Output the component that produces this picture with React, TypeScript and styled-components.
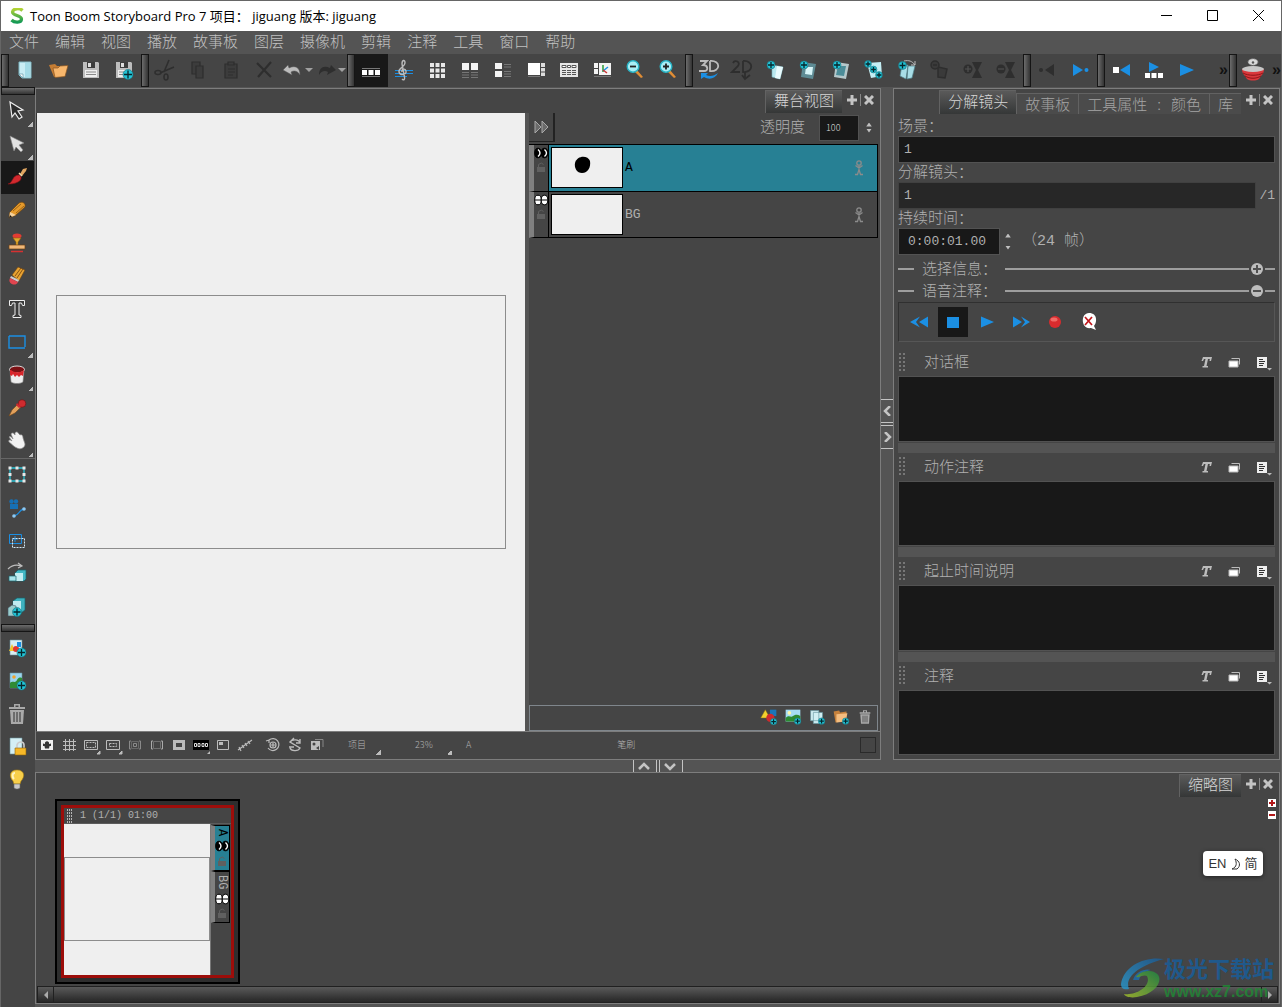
import React, { useState } from "react";
import styled, { createGlobalStyle, css } from "styled-components";

const c = {
  base: "#454545",
  rail: "#545454",
  line: "#7d7d7d",
  well: "#181818",
  edge: "#525252",
  text: "#b0b0b0",
  bright: "#d6d6d6",
  blue: "#1b8fe3",
  teal: "#278094",
  icon: "#bcbcbc",
  paper: "#efefef",
};
const ui = `"Noto Sans CJK SC", "Noto Sans", sans-serif`;
const mono = `"Liberation Mono", "Noto Sans CJK SC", monospace`;

const Global = createGlobalStyle`
  * { box-sizing: border-box; }
  body { margin: 0; background: ${c.rail}; font-family: ${ui}; font-weight: 300; color: ${c.text}; }
  button, input, textarea, select { font: inherit; color: inherit; margin: 0; padding: 0; border: 0; border-radius: 0; background: none; outline: none; }
  svg { display: block; flex: none; }
`;

/* ---------- icons ---------- */

const Badge = ({ x, y, r = 4.6 }: { x: number; y: number; r?: number }) => (
  <g>
    <circle cx={x} cy={y} r={r} fill="#22c3d6" stroke="#1a6d78" strokeWidth=".6" />
    <path d={`M${x - r + 1} ${y}h${2 * r - 2}M${x} ${y - r + 1}v${2 * r - 2}`} stroke="#06272c" strokeWidth="1.3" />
  </g>
);
const G = "#bcbcbc";
const D = "#2e2e2e";
const B = c.blue;
const W = "#f4f4f4";

const icons: Record<string, React.ReactNode> = {
  newDoc: <g><path d="M6 4h12v16H9l-3-3z" fill="#c9edf4" stroke="#7fb8c4" /><path d="M12 5h5v14h-5z" fill="#a4dbe6" /><path d="M6 16h4v4z" fill="#fff" stroke="#669aa6" strokeWidth=".7" /></g>,
  open: <g><path d="M3 7l6-1 2 2h6l1 10-10 1z" fill="#c67d33" /><path d="M7 10l5 0 2-2 8-.5-3 11-10 1z" fill="#f7b66c" stroke="#8a5420" strokeWidth=".7" /></g>,
  save: <g><path d="M4 4h15l1 1v15H4z" fill="#bdbdbd" /><path d="M8 4h8v6H8z" fill="#3d3d3d" /><path d="M9 5h3v4H9z" fill="#ddd" /><path d="M6 12h12v7H6z" fill="#eee" /><path d="M7 14h10M7 16.500h10" stroke="#888" /></g>,
  saveAs: <g><path d="M4 4h15l1 1v15H4z" fill="#bdbdbd" /><path d="M8 4h8v6H8z" fill="#3d3d3d" /><path d="M9 5h3v4H9z" fill="#ddd" /><path d="M6 12h12v7H6z" fill="#eee" /><path d="M7 14h10M7 16.500h10" stroke="#888" /><Badge x={16} y={16.500} r={5} /></g>,
  cut: <g fill="none" stroke={D} strokeWidth="1.600"><path d="M16 2L11 14M21 9L7 15" /><ellipse cx="5" cy="14.500" rx="3" ry="2" /><ellipse cx="13" cy="19" rx="2" ry="3" /></g>,
  copy: <g stroke={D} strokeWidth="1.200" fill="#3c3c3c"><path d="M6 4h8v12H6z" /><path d="M10 8h7v12h-7z" /></g>,
  paste: <g stroke={D} strokeWidth="1.200" fill="#3c3c3c"><path d="M6 6h12v14H6z" /><path d="M9 4h6v3H9zM9 11h7M9 14h7M9 17h5" /></g>,
  del: <path d="M5 5l14 14M19 4L6 19" stroke={D} strokeWidth="2.200" fill="none" />,
  undo: <path d="M2 12l5-5 1 3c6-3 11-1 11 7-2-4-6-5-9-3l1 3z" fill={G} stroke="#5a5a5a" strokeWidth=".5" />,
  redo: <path d="M22 12l-5-5-1 3c-6-3-11-1-11 7 2-4 6-5 9-3l-1 3z" fill={D} />,
  thumbs: <g><path d="M3 10.500h18M3 18.500h18" stroke="#777" /><path d="M3 12h5v5H3zM9.500 12h5v5h-5zM16 12h5v5h-5z" fill="#fff" /></g>,
  clef: <g fill="none"><path d="M3 12.500h18M3 15.500h18M3 18.500h12" stroke={B} /><path d="M10 21c2 2 3 0 2.500-2L10 6c0-4 3-5 3-1 0 4-7 5-6 9 1 4 8 3 7-1-1-3-5-2-4 1" stroke={G} strokeWidth="1.400" /></g>,
  grid: <path d="M5 5h4v4H5zM10.500 5h4v4h-4zM16 5h4v4h-4zM5 10.500h4v4H5zM10.500 10.500h4v4h-4zM16 10.500h4v4h-4zM5 16h4v4H5zM10.500 16h4v4h-4zM16 16h4v4h-4z" fill="#e8e8e8" />,
  two: <g><path d="M4 5h7v7H4zM13 5h7v7h-7z" fill={W} /><path d="M4 14.500h7M4 17h7M4 19.500h7M13 14.500h7M13 17h7M13 19.500h7" stroke="#777" /></g>,
  list: <g><path d="M4 5h7v6H4zM4 13h7v6H4z" fill={W} /><path d="M13 6.500h7M13 9h7M13 13.500h7M13 16h7M13 18.500h7" stroke="#777" /></g>,
  side: <g><path d="M4 5h12v12H4z" fill="#fff" /><path d="M17 5h4v4h-4zM17 10h4v3.500h-4zM17 14.500h4V18h-4z" fill="#ddd" /><path d="M4 18.500h12" stroke="#777" /></g>,
  sheet: <g><path d="M3 5h18v14H3z" fill="#e6e6e6" /><path d="M5 7.500h4v2H5zM10.500 7.500h3v2h-3zM15 7.500h4v2h-4z" fill="#fff" stroke="#555" /><path d="M5 12.500h4M10 12.500h4M15 12.500h4M5 14.500h4M10 14.500h4M15 14.500h4M5 16.500h4M10 16.500h4M15 16.500h4" stroke="#555" /></g>,
  timing: <g><path d="M4 5h4v5H4zM4 11h4v5H4zM9 5h12v12H9z" fill={W} /><path d="M13 7v7" stroke="#2a9d3a" strokeWidth="1.500" /><path d="M13 13l5-4" stroke={B} strokeWidth="1.500" /><path d="M13 12l4 3" stroke="#c33" strokeWidth="1.500" /><path d="M4 18.500h17" stroke="#777" /></g>,
  zoomOut: <g><path d="M14 12l6 7-2 1-6-6z" fill="#e08d35" /><circle cx="10" cy="8.500" r="5.800" fill="#a9eef5" stroke="#29b4c6" strokeWidth="1.400" /><path d="M7 8.500h6" stroke="#222" strokeWidth="1.800" /></g>,
  zoomIn: <g><path d="M14 12l6 7-2 1-6-6z" fill="#e08d35" /><circle cx="10" cy="8.500" r="5.800" fill="#a9eef5" stroke="#29b4c6" strokeWidth="1.400" /><path d="M7 8.500h6M10 5.500v6" stroke="#222" strokeWidth="1.800" /></g>,
  d3: <g fill="none"><path d="M3 3h7l-4 4c5 0 6 6 1 6H2M13 3v10c11 1 11-11 0-10" stroke={G} strokeWidth="1.800" /><path d="M4 15h7l-2 2c4 2 8 1 12-2-3 6-9 7-14 4l-3 2z" fill={B} /></g>,
  d2: <g fill="none" stroke={D} strokeWidth="1.800"><path d="M3 5c2-4 8-1 5 3l-6 6h8M13 3v11c11 1 11-12 0-11M15 14v7M12 17l3 4 5-4" /></g>,
  key1: <g><path d="M9 7l11 2-3 12-8-2z" fill="#b9e8ef" stroke="#73aeb9" strokeWidth=".6" /><path d="M14 8l6 1-3 12-5-1z" fill="#e9fbfd" /><Badge x={8} y={7} r={4} /></g>,
  key2: <g><path d="M7 4l13 2-3 15-12-2z" fill="#5e8b94" /><path d="M10 9h7l-1 8-7-1z" fill="#d7f4f7" /><Badge x={8} y={7} r={4} /></g>,
  key3: <g><path d="M7 4l13 2-3 15-12-2z" fill="#b5c8cb" /><path d="M9 8h8l-2 10-8-1z" fill="#4c8d99" /><Badge x={8} y={7} r={4} /></g>,
  key4: <g><path d="M5 5l14-1 1 14-11 2z" fill="#c3eef4" /><Badge x={6} y={6} r={3.400} /><Badge x={11.500} y={11.500} r={3.400} /><Badge x={17} y={17} r={3.400} /></g>,
  key5: <g><path d="M7 7h6l-2 14-6-3zM13 8h7l-3 12-5 1z" fill="#a8dde6" stroke="#4f7f88" strokeWidth=".7" /><path d="M9 3c5-1 8 0 11 4M20 3v4h-4" stroke={G} fill="none" /><Badge x={7.500} y={7.500} r={4} /></g>,
  key6: <g fill="#3a3a3a" stroke={D} strokeWidth="1.500"><path d="M10 9l9 2-2 9-7-1z" /><circle cx="7" cy="7" r="4" /><path d="M5 7h4" /></g>,
  key7: <g fill={D}><path d="M11 4h10l-4 8 4 8H11l4-8z" /><circle cx="7" cy="11" r="4.500" /><path d="M4 11h6M7 8v6" stroke="#505050" strokeWidth="1.200" /></g>,
  key8: <g fill={D}><path d="M11 4h10l-4 8 4 8H11l4-8z" /><circle cx="7" cy="11" r="4.500" /><path d="M4 11h6" stroke="#505050" strokeWidth="1.200" /></g>,
  prevKey: <g fill={D}><path d="M19 6v12l-9-6z" /><circle cx="6" cy="12" r="2" /></g>,
  nextKey: <g fill={B}><path d="M5 6v12l10-6z" /><circle cx="18.500" cy="12" r="2" /></g>,
  back: <g><path d="M4 9h6v6H4z" fill="#fff" /><path d="M21 6v12l-10-6z" fill={B} /></g>,
  playSel: <g><path d="M7 4l10 5-10 5z" fill={B} /><path d="M3 15h5v5H3zM9.500 15h5v5h-5zM16 15h5v5h-5z" fill="#fff" /></g>,
  play: <path d="M5 6v12l14-6z" fill={B} />,
  flip: <g><path d="M1 11h22c0 3-1 5-3 7l-2 3c-3 2-9 2-12 0l-2-3c-2-2-3-4-3-7z" fill="#d9383c" /><ellipse cx="12" cy="11" rx="11" ry="3" fill="#c7c7c7" /><path d="M2 15c5 3 15 3 20 0M4 18c5 3 11 3 16 0" stroke="#8e1518" fill="none" /><ellipse cx="12" cy="4" rx="5" ry="3.300" fill="#d8d8d8" stroke="#777" strokeDasharray="1.500 1" /><circle cx="12" cy="4.500" r="1.200" fill="#555" /></g>,
  select: <path d="M5 3l13 8-5 1 4 6-3 2-4-6-3 4z" fill="#2c2c2c" stroke="#eee" strokeWidth="1.200" />,
  contour: <path d="M5 4l14 7-5 2 4 5-2 2-5-5-2 4z" fill="#e2e2e2" stroke="#888" strokeWidth=".6" />,
  brush: <g><path d="M15 9l3-5 4-1-1 3-4 5z" fill="#e1a661" /><path d="M3 19c5-1 4-9 11-9 3 1 3 5-1 7s-7 2-10 2z" fill="#d2292e" stroke="#7d1417" strokeWidth=".6" /><path d="M14 8l3 3" stroke="#f0d8a8" strokeWidth="1.500" /></g>,
  pencil: <g><path d="M5 14L14 5c3-2 7 0 6 4l-9 8-7 3z" fill="#e59a2b" stroke="#6d420d" strokeWidth=".7" /><path d="M5 14l6 3-7 3z" fill="#f3d09c" /><path d="M4 20l1-3 2 2z" fill="#111" /><path d="M8 13l8-7M11 15l8-7" stroke="#8b5812" strokeWidth=".8" /></g>,
  stamp: <g><ellipse cx="12" cy="5" rx="4.500" ry="2.500" fill="#e33c33" /><path d="M8 7h8l-3 4v4h-2v-4z" fill="#e3aa2e" stroke="#8a5e10" strokeWidth=".6" /><path d="M4 14h16v4H4z" fill="#f0b878" stroke="#6c3d11" strokeWidth=".7" /><path d="M6 20.500h12" stroke="#d63131" strokeWidth="1.500" /></g>,
  eraser: <g><path d="M7 11l6-8 7 3-6 11z" fill="#e8a333" stroke="#6d420d" strokeWidth=".6" /><path d="M10 12l6-8M12 14l6-9" stroke="#7a4a0e" strokeWidth=".9" /><path d="M6 12l8 4-1 2-8-4z" fill="#ccc" /><path d="M5 14l8 4c-2 5-11 2-8-4z" fill="#e0454f" /></g>,
  text: <path d="M4.500 3.500h15v5h-2l-1-2.500H14v12l2 .5v2H8v-2l2-.5V6H7.500l-1 2.500h-2z" fill="#3a3a3a" stroke="#eee" />,
  rect: <path d="M4 6h16v11M20 18H4V6" fill="none" stroke={B} strokeWidth="1.400" />,
  bucket: <g><path d="M5 8h14l-1 11c-3 2-9 2-12 0z" fill="#eee" stroke="#777" strokeWidth=".6" /><ellipse cx="12" cy="6.500" rx="7.500" ry="3.500" fill="#7b1114" stroke="#ddd" /><path d="M5 7v5l2 1 1-2 2 3 2-2 2 2 2-2 2 1 1-6c-3 3-10 3-13 0z" fill="#d8262b" /></g>,
  dropper: <g><path d="M4 20l3-6 6-6 3 3-6 6z" fill="#e2a15c" stroke="#744616" strokeWidth=".6" /><circle cx="17" cy="7.500" r="3.800" fill="#cf2b2f" stroke="#6b1113" strokeWidth=".6" /><path d="M12 7l4 4-2 1-3-3z" fill="#cf2b2f" /></g>,
  hand: <path d="M4 8c1-1 3 0 4 2L6 5c1-2 3-1 4 1V4c1-2 3-1 4 1l1 1c2-1 3 1 3 3l2 6c0 4-5 6-8 4-3-1-5-4-8-6-1-2 1-3 3-1z" fill="#f2f2f2" stroke="#888" strokeWidth=".7" />,
  transform: <g><path d="M5 5h14v13H5z" fill="none" stroke="#29c0d2" strokeWidth="1.300" /><path d="M3.500 3.500h3v3h-3zM10.500 3.500h3v3h-3zM17.500 3.500h3v3h-3zM3.500 10h3v3h-3zM17.500 10h3v3h-3zM3.500 16.500h3v3h-3zM10.500 16.500h3v3h-3zM17.500 16.500h3v3h-3z" fill="#e8e8e8" /></g>,
  cam: <g fill="none"><path d="M5 8h8v5H5z" fill="#1670b4" /><circle cx="6.500" cy="5.500" r="2.200" fill="#1670b4" /><circle cx="11" cy="5.500" r="2.200" fill="#1670b4" /><path d="M9 20c6-1 4-6 10-7" stroke={B} strokeWidth="1.300" /><circle cx="9" cy="20" r="1.800" fill="#8cc8f2" /><circle cx="19" cy="13" r="1.800" fill="#8cc8f2" /></g>,
  camMove: <g fill="none"><path d="M4.500 5.500h12v9h-12zM10 7v6M7 10h6" stroke={B} /><path d="M7.500 9.500h12v9h-12z" stroke="#cfe6f5" strokeDasharray="2 1" /></g>,
  layerMove: <g><path d="M10 11l3-3h8v9l-2 2h-9z" fill="#42b7c4" stroke="#16616b" strokeWidth=".7" /><path d="M10 11h8v8h-8z" fill="#c2edf2" /><path d="M4 14h7v5H4z" fill="#a7e3ea" stroke="#16616b" strokeWidth=".7" /><path d="M3 7c4-4 8-5 13-3M13 1l4 3-4 2" stroke={G} strokeWidth="1.200" fill="none" /></g>,
  layerAdd: <g><path d="M8 6l4-3h8v12l-4 3H8z" fill="#3eb1be" stroke="#16616b" strokeWidth=".7" /><path d="M8 6h8v12H8z" fill="#bfeaf0" /><path d="M3 13l4-3 4 1v10H3z" fill="#9cc" stroke="#456" strokeWidth=".6" /><Badge x={12} y={17} r={4.500} /></g>,
  docAdd: <g><path d="M5 4h12v15H5z" fill="#d9eef2" stroke="#69929b" strokeWidth=".6" /><path d="M7 8l3 7H4z" fill="#f0c52a" /><circle cx="11" cy="13" r="3" fill="#e2352f" /><path d="M12 6h4v5h-4z" fill={B} /><Badge x={16.500} y={16.500} r={4.500} /></g>,
  imgAdd: <g><path d="M5 4h12v15H5z" fill="#9bd4ee" stroke="#69929b" strokeWidth=".6" /><circle cx="9" cy="8" r="1.800" fill="#f0a22e" /><path d="M5 14c3-3 5 1 7-3s5-2 5-2v10H5z" fill="#2f8b34" /><Badge x={16.500} y={16.500} r={4.500} /></g>,
  trash: <g fill="#a9a9a9"><path d="M4 5h16v2H4zM9 2h6v3h-1.500V3.500h-3V5H9z" /><path d="M5 8h14l-1 14H6z" /><path d="M9 10v10M12 10v10M15 10v10" stroke="#444" strokeWidth="1.200" /></g>,
  lockDoc: <g><path d="M5 3h12v16H5z" fill="#d4eff4" stroke="#69929b" strokeWidth=".6" /><path d="M12 13v-3c1-4 7-4 7 0v3" fill="none" stroke="#ccc" strokeWidth="1.600" /><path d="M10 13h11v7H10z" fill="#f6b828" stroke="#8d6207" strokeWidth=".6" /></g>,
  bulb: <g><path d="M12 2c-8 0-8 7-4 11l1 3h6l1-3c4-4 4-11-4-11z" fill="#f8cf4a" stroke="#b4860f" strokeWidth=".6" /><path d="M10 5c-3 0-3 4-1 6" stroke="#fff3bd" strokeWidth="2" fill="none" /><path d="M9 16h6v4l-2 1h-2l-2-1z" fill="#c8c8c8" stroke="#666" strokeWidth=".6" /></g>,
  rew: <path d="M21 6.500v11L12 12zM13 6.500L3 12l10 5.500L9 12z" fill={B} />,
  stop: <path d="M6 7h12v11H6z" fill={B} />,
  play2: <path d="M6 6.500v11l13-5.500z" fill={B} />,
  ffwd: <path d="M4 6.500v11l9-5.500zM12 6.500l4 5.500-4 5.500 9-5.500z" fill={B} />,
  rec: <g><circle cx="12" cy="12" r="6" fill="#d92b2e" /><ellipse cx="11" cy="9.500" rx="3.500" ry="2" fill="#f06a66" /></g>,
  noVoice: <g><path d="M12 3c9 0 8 10 5 13l2 4-5-2c-10 2-11-15-2-15z" fill="#fff" /><path d="M8 7l7 8M15 7l-7 8" stroke="#c0161b" strokeWidth="1.700" /></g>,
  italicT: <path d="M9 7h9l-1 4h-1.500l.3-2H14l-1.500 7h1.500v1.500H8.500V16H10l1.500-7H10l-1 2H7.500z" fill={G} />,
  windows: <g><path d="M9.500 8.500h8v6" fill="none" stroke={G} /><path d="M7 11h9v6H7z" fill="#fff" stroke={G} /></g>,
  doc: <g><path d="M7 7h10v11H7z" fill="#eee" /><path d="M9 9.500h4M9 11.500h6M9 13.500h5M9 15.500h4" stroke="#333" /><path d="M17 18h5l-2.500 2.500z" fill={G} /></g>,
  expand: <g fill="#6b6b6b" stroke="#a8a8a8"><path d="M6 6v12l6-6zM13 6v12l6-6z" /></g>,
  light: <g><path d="M6 7h12v10H6z" fill="#eee" /><path d="M8 10.500l2 .5V9.500Q12 7 14 9.500V11l2-.5V13h-1.500l-.5 2.500h-4L9.500 13H8z" fill="#333" /></g>,
  hash: <path d="M8.500 6v12M12.500 6v12M16.500 6v12M6 8.500h13M6 12.500h13M6 16.500h13" stroke={G} fill="none" />,
  safe: <g fill="none" stroke={G}><path d="M5.500 7.500h13v9h-13z" /><path d="M7.500 9.500h9v5h-9z" strokeDasharray="2 1" /><path d="M21 18v3h-3z" fill={G} /></g>,
  safe2: <g fill="none" stroke={G}><path d="M5.500 7.500h13v9h-13z" /><path d="M8.500 10.500h7v3h-7z" strokeDasharray="2 1" /><path d="M21 18v3h-3z" fill={G} /></g>,
  mask: <g fill="none" stroke="#8a8a8a"><path d="M8 8H6.500v8H8M16 8h1.500v8H16M10.500 10.500h3v3h-3z" /><path d="M8.500 8.500h7v7h-7z" stroke="#666" /></g>,
  mask2: <g fill="none" stroke="#aaa"><path d="M8 8H6.500v8H8M16 8h1.500v8H16" /><path d="M8.500 8.500h7v7h-7z" stroke="#6f6f6f" /></g>,
  fill: <path d="M6 7h12v10H6zM9 10v4h6v-4z" fill={G} fillRule="evenodd" />,
  tc: <g><path d="M4 7h16v10H4z" fill="#000" /><path d="M5.500 10.500h2v3h-2zM9 10.500h2v3H9zM13 10.500h2v3h-2zM16.500 10.500h2v3h-2z" fill="none" stroke="#ddd" /><path d="M21 18v3h-3z" fill={G} /></g>,
  pip: <g><path d="M6.500 7.500h11v9h-11z" fill="none" stroke={G} /><path d="M8 9h4v3H8z" fill={G} /></g>,
  onion: <path d="M5 17l14-10M6 14l2 4M9 12l2 3M12 10l2 3M15 8l2 3" stroke={G} fill="none" strokeWidth="1.200" />,
  rotate: <g fill="none" stroke={G} strokeWidth="1.200"><path d="M8 7a6 6 0 1 1-1 8M5 8l3-1 0 3" /><circle cx="12" cy="12" r="3" /><path d="M12 9.500v5M9.500 12h5" /></g>,
  reset: <g fill="none" stroke={G} strokeWidth="1.400"><path d="M17 10c-1-4-8-4-10-1l10 6c-2 4-9 3-10 0M17 6v4h-4M6 14h5M11 5l-4 4" /></g>,
  camView: <g><path d="M10 6.500h8V14" fill="none" stroke="#888" /><path d="M6 8h9v9H6z" fill={G} /><circle cx="9" cy="11" r="1.500" fill="#444" /><path d="M11 15l3-2v4z" fill="#444" /></g>,
  shapes: <g><path d="M8 4l5 9H3z" fill="#f2d12e" stroke="#8b7412" strokeWidth=".5" /><path d="M13 4h7v7h-7z" fill="#1b76b8" /><circle cx="13.500" cy="13" r="4.500" fill="#cf2a2c" /><Badge x={17} y={17} r={3.500} /></g>,
  pic: <g><path d="M4 4h16v13H4z" fill="#a5dcf3" /><circle cx="8" cy="7.500" r="2" fill="#fff6a8" /><path d="M4 13c4-4 5 0 8-2s5-2 8 0v6H4z" fill="#2c8a31" /><Badge x={17} y={16.500} r={3.500} /></g>,
  dup: <g><path d="M5 5h9v11H5zM8 7h10v12H8z" fill="#d1eff3" stroke="#62939c" strokeWidth=".7" /><Badge x={17} y={16.500} r={3.500} /></g>,
  group: <g><path d="M4 6l6-1 1 2 7-1v10L6 18z" fill="#c6813c" /><path d="M7 9l12-1-2 9-10 1z" fill="#f4bd80" /><Badge x={17} y={16.500} r={3.500} /></g>,
};

const Icon = ({ name, size = 24 }: { name: string; size?: number }) => (
  <svg width={size} height={size} viewBox="0 0 24 24" aria-hidden="true">{icons[name]}</svg>
);
const Eyes = ({ open }: { open?: boolean }) => (
  <svg width="14" height="12" viewBox="0 0 14 12" aria-hidden="true">
    <ellipse cx="4" cy="6" rx="3.300" ry="4.800" fill={open ? "#000" : "#fff"} stroke="#000" />
    <ellipse cx="10.500" cy="6" rx="3.300" ry="4.800" fill={open ? "#000" : "#fff"} stroke="#000" />
    {open ? <path d="M4 2.500q4 3.500 0 7M10.500 2.500q4 3.500 0 7" stroke="#fff" strokeWidth="1.400" fill="none" /> : <path d="M1 6h12.500" stroke="#000" />}
  </svg>
);
const Lock = () => (
  <svg width="10" height="11" viewBox="0 0 10 11" aria-hidden="true">
    <path d="M2.500 5V2.500Q5.500-.5 7.500 2.500" fill="none" stroke="#606060" /><path d="M1 5h8v5H1z" fill="#606060" />
  </svg>
);
const Puppet = () => (
  <svg width="10" height="16" viewBox="0 0 10 16" aria-hidden="true">
    <path d="M5 5.500v4L3.500 14.500H1M5 9.500l1.500 5H9M1.500 5.500L5 8l3.500-2.500" fill="none" stroke="#8b8b8b" strokeWidth="1.300" /><circle cx="5" cy="3" r="2.200" fill="none" stroke="#8b8b8b" strokeWidth="1.300" />
  </svg>
);
const Dots = ({ cols = 2, w = 7, h = 19 }: { cols?: number; w?: number; h?: number }) => (
  <svg width={w} height={h} aria-hidden="true">
    {Array.from({ length: 5 * cols }, (_, i) => (
      <rect key={i} x={(i % cols) * (cols > 2 ? 2 : 4)} y={Math.floor(i / cols) * (cols > 2 ? 3 : 4)} width={cols > 2 ? 1 : 2} height="2" fill={cols > 2 ? "#b5b5b5" : "#777"} />
    ))}
  </svg>
);
const Chevron = ({ d }: { d: "up" | "down" | "left" | "right" }) => (
  <svg width="14" height="10" viewBox="-7 -5 14 10" aria-hidden="true">
    <path d={{ up: "M-6 3L-1-2 4 3", down: "M-6-2L-1 3 4-2", left: "M2-5L-3 0 2 5", right: "M-3-5L2 0-3 5" }[d]} fill="none" stroke="#c4c4c4" strokeWidth="2.500" />
  </svg>
);

/* ---------- frame ---------- */

const Window = styled.div`
  display: flex;
  flex-direction: column;
  min-height: 100vh;
  border: 1px solid #666;
  border-bottom: 0;
  background: ${c.rail};
`;
const TitleBar = styled.header`
  display: flex;
  align-items: center;
  height: 30px;
  padding-left: 9px;
  background: #fff;
  color: #000;
  font: 400 13px/28px "Open Sans", ${ui};
`;
const TitleText = styled.span`
  flex: 1;
  padding-left: 6px;
  white-space: pre;
`;
const WinButton = styled.button`
  width: 46px;
  height: 30px;
  padding-bottom: 2px;
  display: grid;
  place-items: center;
`;
const MenuBar = styled.nav`
  display: flex;
  gap: 16px;
  height: 23px;
  padding-left: 8px;
  font-size: 15px;
  line-height: 18px;
  color: #c2c2c2;
`;
const MenuItem = styled.button`
  padding-bottom: 4px;
`;
const ToolBar = styled.div`
  display: flex;
  height: 33px;
  background: ${c.base};
`;
const Grip = styled.span<{ $flat?: boolean }>`
  flex: none;
  width: ${(p) => (p.$flat ? "auto" : "8px")};
  height: ${(p) => (p.$flat ? "8px" : "auto")};
  border: 1px solid #151515;
  background: linear-gradient(${(p) => (p.$flat ? "180deg" : "90deg")}, #6c6c6c, #333);
`;
const ToolButton = styled.button<{ $on?: boolean; $more?: boolean }>`
  flex: none;
  width: 33px;
  height: 33px;
  padding: 0 2px 2px 0;
  display: flex;
  align-items: center;
  justify-content: center;
  background: ${(p) => (p.$on ? c.well : "none")};
  ${(p) => p.$more && css`
    background: linear-gradient(135deg, transparent 50%, ${c.icon} 50%) right 1px bottom 1px / 5px 5px no-repeat;
  `}
`;
const Caret = styled.span`
  border: 4px solid transparent;
  border-top-color: #a0a0a0;
  border-bottom: 0;
`;
const Overflow = styled.button<{ $grow?: boolean }>`
  flex: ${(p) => (p.$grow ? "1" : "none")};
  min-width: 11px;
  padding-right: ${(p) => (p.$grow ? "1px" : "0")};
  padding-bottom: 2px;
  text-align: right;
  color: #111;
  font: 700 16px/28px "Liberation Sans", sans-serif;
`;
const Body = styled.div`
  flex: 1;
  display: flex;
`;
const SideBar = styled.aside`
  width: 34px;
  flex: none;
  display: flex;
  flex-direction: column;
  background: ${c.base};
`;
const Rule = styled.hr`
  width: 100%;
  height: 1px;
  margin: 0;
  border: 0;
  border-top: 1px solid #666;
`;
const Workspace = styled.main`
  flex: 1;
  min-width: 0;
  display: flex;
  flex-direction: column;
  padding: 1px 1px 3px 0;
`;
const Upper = styled.div`
  flex: 1;
  display: flex;
`;
const Panel = styled.section<{ $width?: number; $height?: number }>`
  ${(p) => (p.$width ? `flex: none; width: ${p.$width}px;` : p.$height ? `flex: none; height: ${p.$height}px;` : "flex: 1;")}
  min-width: 0;
  display: flex;
  flex-direction: column;
  border: 1px solid ${c.line};
  background: ${c.base};
`;
const Divider = styled.div<{ $vertical?: boolean }>`
  flex: none;
  display: flex;
  flex-direction: ${(p) => (p.$vertical ? "column" : "row")};
  align-items: center;
  justify-content: center;
  gap: 2px;
  ${(p) => (p.$vertical ? "width: 12px;" : "height: 12px;")}
`;
const DividerButton = styled.button<{ $vertical?: boolean }>`
  display: grid;
  place-items: center;
  ${(p) => p.$vertical
    ? `width: 12px; height: 24px; border: solid #c4c4c4; border-width: 1px 0;`
    : `width: 24px; height: 12px; border: solid #c4c4c4; border-width: 0 1px;`}
`;
const TabRow = styled.div<{ $tall?: boolean }>`
  flex: none;
  display: flex;
  align-items: ${(p) => (p.$tall ? "flex-end" : "flex-start")};
  justify-content: flex-end;
  height: ${(p) => (p.$tall ? "25px" : "24px")};
  padding: 1px 4px 0 0;
`;
const Tab = styled.button<{ $on?: boolean }>`
  height: ${(p) => (p.$on ? "100%" : "21px")};
  max-height: 24px;
  padding: 0 8px ${(p) => (p.$on ? "4px" : "0")};
  border: 1px solid #626262;
  border-width: 1px 0 0 1px;
  white-space: pre;
  font-size: 15px;
  line-height: 18px;
  color: ${(p) => (p.$on ? c.bright : "#a4a4a4")};
  background: ${(p) => (p.$on ? "linear-gradient(#5a5a5a, #353737)" : "#4b4b4b")};
`;
const TabTools = styled.div`
  display: flex;
  align-items: center;
  align-self: flex-start;
  height: 20px;
  margin-left: 2px;
`;
const TabTool = styled.button`
  width: 16px;
  height: 16px;
  display: grid;
  place-items: center;
  & + & { border-left: 1px solid #888; height: 12px; }
`;

const PanelTools = () => (
  <TabTools>
    <TabTool aria-label="+"><svg width="12" height="12"><path d="M1 6h10M6 1v10" stroke="#c4c4c4" strokeWidth="3" /></svg></TabTool>
    <TabTool aria-label="×"><svg width="10" height="10"><path d="M1 1l8 8M9 1L1 9" stroke="#c4c4c4" strokeWidth="3" /></svg></TabTool>
  </TabTools>
);

/* ---------- stage ---------- */

const StageBody = styled.div`
  flex: 1;
  display: flex;
  border-left: 1px solid #333;
  border-bottom: 1px solid ${c.line};
`;
const Canvas = styled.div`
  flex: 1;
  min-width: 0;
  display: grid;
  place-items: center;
  background: ${c.paper};
`;
const Frame = styled.div`
  width: calc(100% - 38px);
  aspect-ratio: 450 / 254;
  border: 1px solid #8c8c8c;
`;
const LayerPane = styled.div`
  width: 355px;
  flex: none;
  display: flex;
  flex-direction: column;
  padding-right: 2px;
  border-left: 4px solid ${c.rail};
`;
const LayerHead = styled.div`
  display: flex;
  align-items: center;
  height: 31px;
  padding: 0 5px 2px 0;
  font-size: 15px;
`;
const OpacityLabel = styled.label`
  height: 24px;
  line-height: 20px;
`;
const Toggle = styled.button`
  width: 26px;
  height: 29px;
  margin-right: auto;
  display: grid;
  place-items: center;
  border: 1px solid #222;
  border-width: 0 2px 1px 0;
`;
const OpacityInput = styled.input`
  width: 40px;
  height: 26px;
  margin: 0 6px 0 14px;
  padding-left: 6px;
  border: 1px solid ${c.edge};
  background: ${c.well};
  font-size: 9px;
  color: #ddd;
`;
const Steps = styled.span<{ $gap: number }>`
  display: flex;
  flex-direction: column;
  gap: ${(p) => p.$gap}px;
`;
const Step = styled.button<{ $down?: boolean }>`
  width: 8px;
  height: 4px;
  background: #c0c0c0;
  clip-path: ${(p) => (p.$down ? "polygon(15% 0, 85% 0, 50% 100%)" : "polygon(50% 0, 85% 100%, 15% 100%)")};
`;
const LayerList = styled.ul`
  margin: 0;
  padding: 0;
  list-style: none;
  border: 1px solid #000;
  border-left: 0;
  border-bottom: 0;
`;
const LayerRow = styled.li<{ $on?: boolean }>`
  display: flex;
  align-items: center;
  height: ${(p) => (p.$on ? "47px" : "46px")};
  padding-right: 13px;
  border-bottom: 1px solid #000;
  border-left: 5px solid #808080;
  color: ${(p) => (p.$on ? "#000" : c.text)};
  background: ${(p) => (p.$on ? c.teal : c.base)};
`;
const LayerFlags = styled.div`
  width: 15px;
  height: 100%;
  padding-top: 2px;
  display: flex;
  flex-direction: column;
  align-items: center;
  gap: 3px;
  border-right: 1px solid #000;
  background: ${c.base};
`;
const Plain = styled.button`
  display: grid;
  place-items: center;
`;
const LayerThumb = styled.div`
  width: 72px;
  height: 41px;
  margin: 0 2px 1px;
  border: 1px solid #000;
  background: ${c.paper};
`;
const LayerName = styled.span`
  flex: 1;
  font: 400 13px/20px ${mono};
`;
const LayerTools = styled.div`
  display: flex;
  align-items: center;
  justify-content: flex-end;
  height: 26px;
  margin-top: auto;
  padding-bottom: 2px;
  border: 1px solid #7f868c;
`;
const LayerTool = styled.button`
  width: 24px;
  display: grid;
  place-items: center;
`;
const StatusBar = styled.div`
  flex: none;
  display: flex;
  align-items: center;
  height: 27px;
  padding-bottom: 2px;
  font-size: 9px;
  color: #b4b4b4;
`;
const StatusButton = styled.button<{ $gap?: boolean }>`
  width: 22px;
  height: 24px;
  margin-left: ${(p) => (p.$gap ? "6px" : "0")};
  display: flex;
  justify-content: center;
`;
const StatusSelect = styled.select<{ $wide?: boolean }>`
  width: ${(p) => (p.$wide ? "71px" : "53px")};
  height: 20px;
  padding-left: ${(p) => (p.$wide ? "34px" : "20px")};
  appearance: none;
  background: linear-gradient(135deg, transparent 50%, ${c.icon} 50%) right bottom / 5px 5px no-repeat;
`;
const StatusText = styled.span<{ $brush?: boolean }>`
  margin-left: ${(p) => (p.$brush ? "146px" : "14px")};
`;
const Swatch = styled.button`
  width: 16px;
  height: 16px;
  margin: 0 4px 0 auto;
  border: 1px solid #2a2a2a;
`;

/* ---------- panel view ---------- */

const Form = styled.form`
  flex: 1;
  display: flex;
  flex-direction: column;
  padding: 3px 4px 4px;
  font-size: 15px;
`;
const Label = styled.label`
  height: 19px;
  line-height: 16px;
`;
const FieldRow = styled.div`
  display: flex;
  align-items: center;
  gap: 3px;
`;
const Field = styled.input<{ $dim?: boolean; $time?: boolean }>`
  ${(p) => (p.$time ? "flex: none; width: 102px; margin-right: 1px;" : "flex: 1; min-width: 0;")}
  height: 27px;
  padding-left: ${(p) => (p.$time ? "9px" : "5px")};
  border: 1px solid ${(p) => (p.$dim ? "#404040" : c.edge)};
  background: ${(p) => (p.$dim ? "#272727" : c.well)};
  font: 400 13px/20px ${mono};
`;
const Suffix = styled.span<{ $far?: boolean }>`
  padding-left: ${(p) => (p.$far ? "7px" : "0")};
  font: 300 ${(p) => (p.$far ? "15px" : "13px")}/20px ${mono};
`;
const Folds = styled.div`
  padding-top: 3px;
`;
const Fold = styled.div`
  display: flex;
  align-items: center;
  height: 22px;
  &::before { content: ""; width: 16px; height: 2px; margin-right: 8px; background: #9e9e9e; }
  &::after { content: ""; width: 10px; height: 2px; margin-left: 2px; background: #9e9e9e; }
`;
const FoldTitle = styled.span`
  height: 22px;
  line-height: 19px;
`;
const FoldLine = styled.span`
  flex: 1;
  height: 2px;
  margin: 0 2px 0 8px;
  background: #9e9e9e;
`;
const FoldButton = styled.button`
  width: 12px;
  height: 12px;
  border-radius: 50%;
  background: #bdbdbd;
  display: grid;
  place-items: center;
`;
const VoiceBar = styled.div`
  display: flex;
  align-items: center;
  gap: 4px;
  height: 40px;
  padding-left: 5px;
  margin: 0 0 6px 0;
  border: 1px solid #565656;
  border-top-color: #303030;
  border-left-color: #303030;
`;
const VoiceButton = styled.button<{ $on?: boolean }>`
  width: 30px;
  height: 30px;
  display: grid;
  place-items: center;
  background: ${(p) => (p.$on ? c.well : "none")};
`;
const Caption = styled.div`
  flex: 1;
  display: flex;
  flex-direction: column;
  & + & { border-top: 10px solid ${c.rail}; margin-top: 1px; }
`;
const CaptionHead = styled.div`
  display: flex;
  align-items: center;
  height: 28px;
  padding-left: 1px;
`;
const CaptionLabel = styled.label`
  flex: 1;
  padding: 0 0 2px 18px;
  line-height: 20px;
`;
const CaptionTool = styled.button`
  width: 28px;
  height: 24px;
  padding-left: 2px;
  display: grid;
  place-items: center;
`;
const CaptionText = styled.textarea`
  flex: 1;
  min-height: 40px;
  padding: 4px;
  resize: none;
  border: 1px solid ${c.edge};
  background: ${c.well};
`;

/* ---------- thumbnails ---------- */

const Strip = styled.div`
  flex: 1;
  display: flex;
  align-items: flex-start;
  justify-content: space-between;
  padding: 2px 3px 0 19px;
`;
const Card = styled.div`
  width: 185px;
  height: 185px;
  border: 2px solid #000;
  padding: 4px;
  background: #2e2e2e;
`;
const CardInner = styled.div`
  height: 100%;
  display: flex;
  flex-direction: column;
  border: 3px solid #9c0d0a;
  background: ${c.base};
`;
const CardHead = styled.div`
  display: flex;
  align-items: center;
  gap: 7px;
  height: 16px;
  padding-left: 3px;
  border-bottom: 1px solid #5c5c5c;
  font: 400 10px/14px "Liberation Mono", monospace;
  white-space: pre;
`;
const CardBody = styled.div`
  flex: 1;
  display: flex;
`;
const CardPicture = styled.div`
  flex: 1;
  display: grid;
  align-items: center;
  padding-bottom: 2px;
  border-right: 1px solid #777;
  background: ${c.paper};
`;
const CardFrame = styled.div`
  height: 84px;
  border: 1px solid #8c8c8c;
`;
const CardLayers = styled.div`
  width: 20px;
  padding: 1px 1px 0 0;
`;
const CardLayer = styled.div<{ $on?: boolean }>`
  display: flex;
  flex-direction: column;
  align-items: center;
  justify-content: space-between;
  height: ${(p) => (p.$on ? "46px" : "52px")};
  padding: 3px 0;
  border: 1px solid #000;
  border-left: 4px solid #808080;
  color: ${(p) => (p.$on ? "#000" : c.text)};
  background: ${(p) => (p.$on ? c.teal : c.base)};
`;
const SideName = styled.span`
  writing-mode: vertical-rl;
  font: 400 12px/14px ${mono};
`;
const RowMarks = styled.div`
  display: flex;
  flex-direction: column;
  gap: 4px;
`;
const ScrollRow = styled.div`
  flex: none;
  display: flex;
  height: 17px;
  margin: 0 1px;
  border: 1px solid #202020;
  background: linear-gradient(#5a5a5a, #262626);
`;
const ScrollEnd = styled.button<{ $right?: boolean }>`
  width: 16px;
  display: grid;
  place-items: center;
  margin-left: ${(p) => (p.$right ? "auto" : "0")};
  border: solid #202020;
  border-width: ${(p) => (p.$right ? "0 0 0 1px" : "0 1px 0 0")};
`;

const Ime = styled.div`
  position: absolute;
  right: 19px;
  bottom: 131px;
  display: flex;
  align-items: center;
  justify-content: center;
  gap: 4px;
  width: 60px;
  height: 25px;
  border-radius: 4px;
  background: #fff;
  color: #333;
  box-shadow: 0 1px 4px #222;
  font: 400 13px/20px "Liberation Sans", ${ui};
`;
const Mark = styled.div`
  position: absolute;
  right: 8px;
  bottom: 6px;
  display: flex;
  align-items: center;
  pointer-events: none;
  opacity: .8;
`;
const MarkText = styled.div`
  display: flex;
  flex-direction: column;
  gap: 4px;
  font: 700 22px/24px ${ui};
  color: #165f9e;
`;
const MarkSite = styled.span`
  font: 700 16px/18px "Liberation Sans", sans-serif;
  color: #1f8a35;
`;

/* ---------- content ---------- */

const menus = ["文件", "编辑", "视图", "播放", "故事板", "图层", "摄像机", "剪辑", "注释", "工具", "窗口", "帮助"];
const topTools = [
  ["newDoc", "open", "save", "saveAs"],
  ["cut", "copy", "paste", "del", "undo", "redo"],
  ["thumbs", "clef", "grid", "two", "list", "side", "sheet", "timing", "zoomOut", "zoomIn"],
  ["d3", "d2", "key1", "key2", "key3", "key4", "key5", "key6", "key7", "key8"],
  ["prevKey", "nextKey"],
  ["back", "playSel", "play"],
];
const drawTools = ["select", "contour", "brush", "pencil", "stamp", "eraser", "text", "rect", "bucket", "dropper", "hand"];
const moveTools = ["transform", "cam", "camMove", "layerMove", "layerAdd"];
const assetTools = ["docAdd", "imgAdd", "trash", "lockDoc", "bulb"];
const withMore = ["select", "contour", "rect", "bucket", "hand"];
const viewTools = ["light", "hash", "safe", "safe2", "mask", "mask2", "fill", "tc", "pip", "onion", "rotate", "reset", "camView"];
const captions = ["对话框", "动作注释", "起止时间说明", "注释"];

export default function App() {
  const [tool, setTool] = useState("brush");
  const [panelTab, setPanelTab] = useState("分解镜头");

  return (
    <Window>
      <Global />
      <TitleBar>
        <svg width="14" height="17" viewBox="0 0 14 17" aria-hidden="true">
          <defs><linearGradient id="logo" x2="0" y2="1"><stop stopColor="#b3d334" /><stop offset="1" stopColor="#159a55" /></linearGradient></defs>
          <path d="M12.500 2.500C10 0 3 0 2.500 4c0 4 9 3 9 7 0 4-7 4-10 1" fill="none" stroke="url(#logo)" strokeWidth="3.200" />
        </svg>
        <TitleText>Toon Boom Storyboard Pro 7 项目： jiguang 版本: jiguang</TitleText>
        <WinButton aria-label="minimize"><svg width="11" height="11"><path d="M0 5.500h11" stroke="#000" /></svg></WinButton>
        <WinButton aria-label="maximize"><svg width="11" height="11"><path d="M.5.500h10v10H.5z" fill="none" stroke="#000" /></svg></WinButton>
        <WinButton aria-label="close"><svg width="11" height="11"><path d="M0 0l11 11M11 0L0 11" stroke="#000" /></svg></WinButton>
      </TitleBar>
      <MenuBar>{menus.map((m) => <MenuItem key={m}>{m}</MenuItem>)}</MenuBar>
      <ToolBar>
        {topTools.map((group, i) => (
          <React.Fragment key={i}>
            <Grip />
            {group.map((n) => (
              <ToolButton key={n} aria-label={n} $on={n === "thumbs"}>
                <Icon name={n} />
                {(n === "undo" || n === "redo") && <Caret />}
              </ToolButton>
            ))}
          </React.Fragment>
        ))}
        <Overflow $grow>»</Overflow>
        <Grip />
        <ToolButton aria-label="flip"><Icon name="flip" /></ToolButton>
        <Overflow>»</Overflow>
      </ToolBar>

      <Body>
        <SideBar>
          <Grip $flat />
          {drawTools.map((n) => (
            <ToolButton key={n} aria-label={n} $on={tool === n} $more={withMore.includes(n)} onClick={() => setTool(n)}><Icon name={n} /></ToolButton>
          ))}
          <Rule />
          {moveTools.map((n) => <ToolButton key={n} aria-label={n}><Icon name={n} /></ToolButton>)}
          <Grip $flat />
          {assetTools.map((n) => <ToolButton key={n} aria-label={n}><Icon name={n} /></ToolButton>)}
        </SideBar>

        <Workspace>
          <Upper>
            <Panel>
              <TabRow>
                <Tab $on>舞台视图</Tab>
                <PanelTools />
              </TabRow>
              <StageBody>
                <Canvas><Frame /></Canvas>
                <LayerPane>
                  <LayerHead>
                    <Toggle aria-label="expand"><Icon name="expand" /></Toggle>
                    <OpacityLabel htmlFor="opacity">透明度</OpacityLabel>
                    <OpacityInput id="opacity" defaultValue="100" />
                    <Steps $gap={2}><Step aria-label="up" /><Step $down aria-label="down" /></Steps>
                  </LayerHead>
                  <LayerList>
                    <LayerRow $on>
                      <LayerFlags><Plain aria-label="visible"><Eyes open /></Plain><Plain aria-label="lock"><Lock /></Plain></LayerFlags>
                      <LayerThumb>
                        <svg width="70" height="39" aria-hidden="true"><path d="M23 15c2-8 13-8 15-2 1 6-2 12-8 12-5 0-8-5-7-10z" fill="#000" /></svg>
                      </LayerThumb>
                      <LayerName>A</LayerName>
                      <Puppet />
                    </LayerRow>
                    <LayerRow>
                      <LayerFlags><Plain aria-label="visible"><Eyes /></Plain><Plain aria-label="lock"><Lock /></Plain></LayerFlags>
                      <LayerThumb />
                      <LayerName>BG</LayerName>
                      <Puppet />
                    </LayerRow>
                  </LayerList>
                  <LayerTools>
                    {["shapes", "pic", "dup", "group"].map((n) => <LayerTool key={n} aria-label={n}><Icon name={n} size={22} /></LayerTool>)}
                    <LayerTool aria-label="trash"><Icon name="trash" size={16} /></LayerTool>
                  </LayerTools>
                </LayerPane>
              </StageBody>
              <StatusBar>
                {viewTools.map((n) => <StatusButton key={n} aria-label={n} $gap={n === "rotate"}><Icon name={n} /></StatusButton>)}
                <StatusSelect aria-label="颜色空间"><option>项目</option></StatusSelect>
                <StatusSelect aria-label="缩放" $wide><option>23%</option></StatusSelect>
                <StatusText>A</StatusText>
                <StatusText $brush>笔刷</StatusText>
                <Swatch aria-label="swatch" />
              </StatusBar>
            </Panel>

            <Divider $vertical>
              <DividerButton $vertical aria-label="left"><Chevron d="left" /></DividerButton>
              <DividerButton $vertical aria-label="right"><Chevron d="right" /></DividerButton>
            </Divider>

            <Panel $width={387}>
              <TabRow $tall>
                {["分解镜头", "故事板", "工具属性   :   颜色", "库"].map((t) => (
                  <Tab key={t} $on={panelTab === t} onClick={() => setPanelTab(t)}>{t}</Tab>
                ))}
                <PanelTools />
              </TabRow>
              <Form onSubmit={(e) => e.preventDefault()}>
                <Label htmlFor="scene">场景：</Label>
                <FieldRow><Field id="scene" defaultValue="1" /></FieldRow>
                <Label htmlFor="shot">分解镜头：</Label>
                <FieldRow><Field id="shot" $dim defaultValue="1" /><Suffix>/1</Suffix></FieldRow>
                <Label htmlFor="time">持续时间：</Label>
                <FieldRow>
                  <Field id="time" $time defaultValue="0:00:01.00" />
                  <Steps $gap={8}><Step aria-label="up" /><Step $down aria-label="down" /></Steps>
                  <Suffix $far>（24 帧）</Suffix>
                </FieldRow>
                <Folds>
                  <Fold><FoldTitle>选择信息：</FoldTitle><FoldLine /><FoldButton type="button" aria-label="open"><svg width="8" height="8"><path d="M0 4h8M4 0v8" stroke="#505050" strokeWidth="2" /></svg></FoldButton></Fold>
                  <Fold><FoldTitle>语音注释：</FoldTitle><FoldLine /><FoldButton type="button" aria-label="close"><svg width="8" height="8"><path d="M0 4h8" stroke="#505050" strokeWidth="2" /></svg></FoldButton></Fold>
                </Folds>
                <VoiceBar>
                  {["rew", "stop", "play2", "ffwd", "rec", "noVoice"].map((n) => (
                    <VoiceButton key={n} type="button" aria-label={n} $on={n === "stop"}><Icon name={n} /></VoiceButton>
                  ))}
                </VoiceBar>
                {captions.map((t, i) => (
                  <Caption key={t}>
                    <CaptionHead>
                      <Dots />
                      <CaptionLabel htmlFor={`caption${i}`}>{t}</CaptionLabel>
                      {["italicT", "windows", "doc"].map((n) => <CaptionTool key={n} type="button" aria-label={n}><Icon name={n} /></CaptionTool>)}
                    </CaptionHead>
                    <CaptionText id={`caption${i}`} />
                  </Caption>
                ))}
              </Form>
            </Panel>
          </Upper>

          <Divider>
            <DividerButton aria-label="up"><Chevron d="up" /></DividerButton>
            <DividerButton aria-label="down"><Chevron d="down" /></DividerButton>
          </Divider>

          <Panel $height={232}>
            <TabRow>
              <Tab $on>缩略图</Tab>
              <PanelTools />
            </TabRow>
            <Strip>
              <Card>
                <CardInner>
                  <CardHead><Dots cols={3} w={6} h={14} />1 (1/1) 01:00</CardHead>
                  <CardBody>
                    <CardPicture><CardFrame /></CardPicture>
                    <CardLayers>
                      <CardLayer $on><SideName>A</SideName><Eyes open /><Lock /></CardLayer>
                      <CardLayer><SideName>BG</SideName><Eyes /><Lock /></CardLayer>
                    </CardLayers>
                  </CardBody>
                </CardInner>
              </Card>
              <RowMarks>
                <Plain aria-label="+"><svg width="8" height="8"><path d="M0 0h8v8H0z" fill="#fff" /><path d="M1 4h6M4 1v6" stroke="#b3191a" strokeWidth="2" /></svg></Plain>
                <Plain aria-label="−"><svg width="8" height="8"><path d="M0 0h8v8H0z" fill="#fff" /><path d="M1 4h6" stroke="#b3191a" strokeWidth="2" /></svg></Plain>
              </RowMarks>
            </Strip>
            <ScrollRow>
              <ScrollEnd aria-label="left"><svg width="6" height="8"><path d="M5 0v8L1 4z" fill="#aaa" /></svg></ScrollEnd>
              <ScrollEnd $right aria-label="right"><svg width="6" height="8"><path d="M1 0v8l4-4z" fill="#aaa" /></svg></ScrollEnd>
            </ScrollRow>
          </Panel>
        </Workspace>
      </Body>

      <Ime>
        EN
        <svg width="10" height="12" viewBox="0 0 10 12" aria-hidden="true"><path d="M4 1c5 2 6 7 2 10H1c5-2 5-6 3-10z" fill="none" stroke="#333" /></svg>
        简
      </Ime>
      <Mark>
        <svg width="44" height="42" viewBox="0 0 44 42" aria-hidden="true">
          <defs>
            <linearGradient id="swirlA" x1="1" x2="0" y2="1"><stop stopColor="#1a5c98" /><stop offset="1" stopColor="#2a9bd0" /></linearGradient>
            <linearGradient id="swirlB" x1="1" x2="0" y2="1"><stop stopColor="#1e8a42" /><stop offset="1" stopColor="#a9c32c" /></linearGradient>
          </defs>
          <path d="M44 2C26-1 4 8 1 27c0 5 4 6 8 5C4 20 20 8 44 2z" fill="url(#swirlA)" />
          <path d="M13 23c2-8 12-12 18-10-6 1-11 5-12 10z" fill="#1d6fae" />
          <path d="M29 14c18 1 12 22-12 26-6 1-12 0-13-3 12 2 28-8 23-18-3-2-8 2-11 1 3-4 8-6 13-6z" fill="url(#swirlB)" />
        </svg>
        <MarkText>极光下载站<MarkSite>www.xz7.com</MarkSite></MarkText>
      </Mark>
    </Window>
  );
}
